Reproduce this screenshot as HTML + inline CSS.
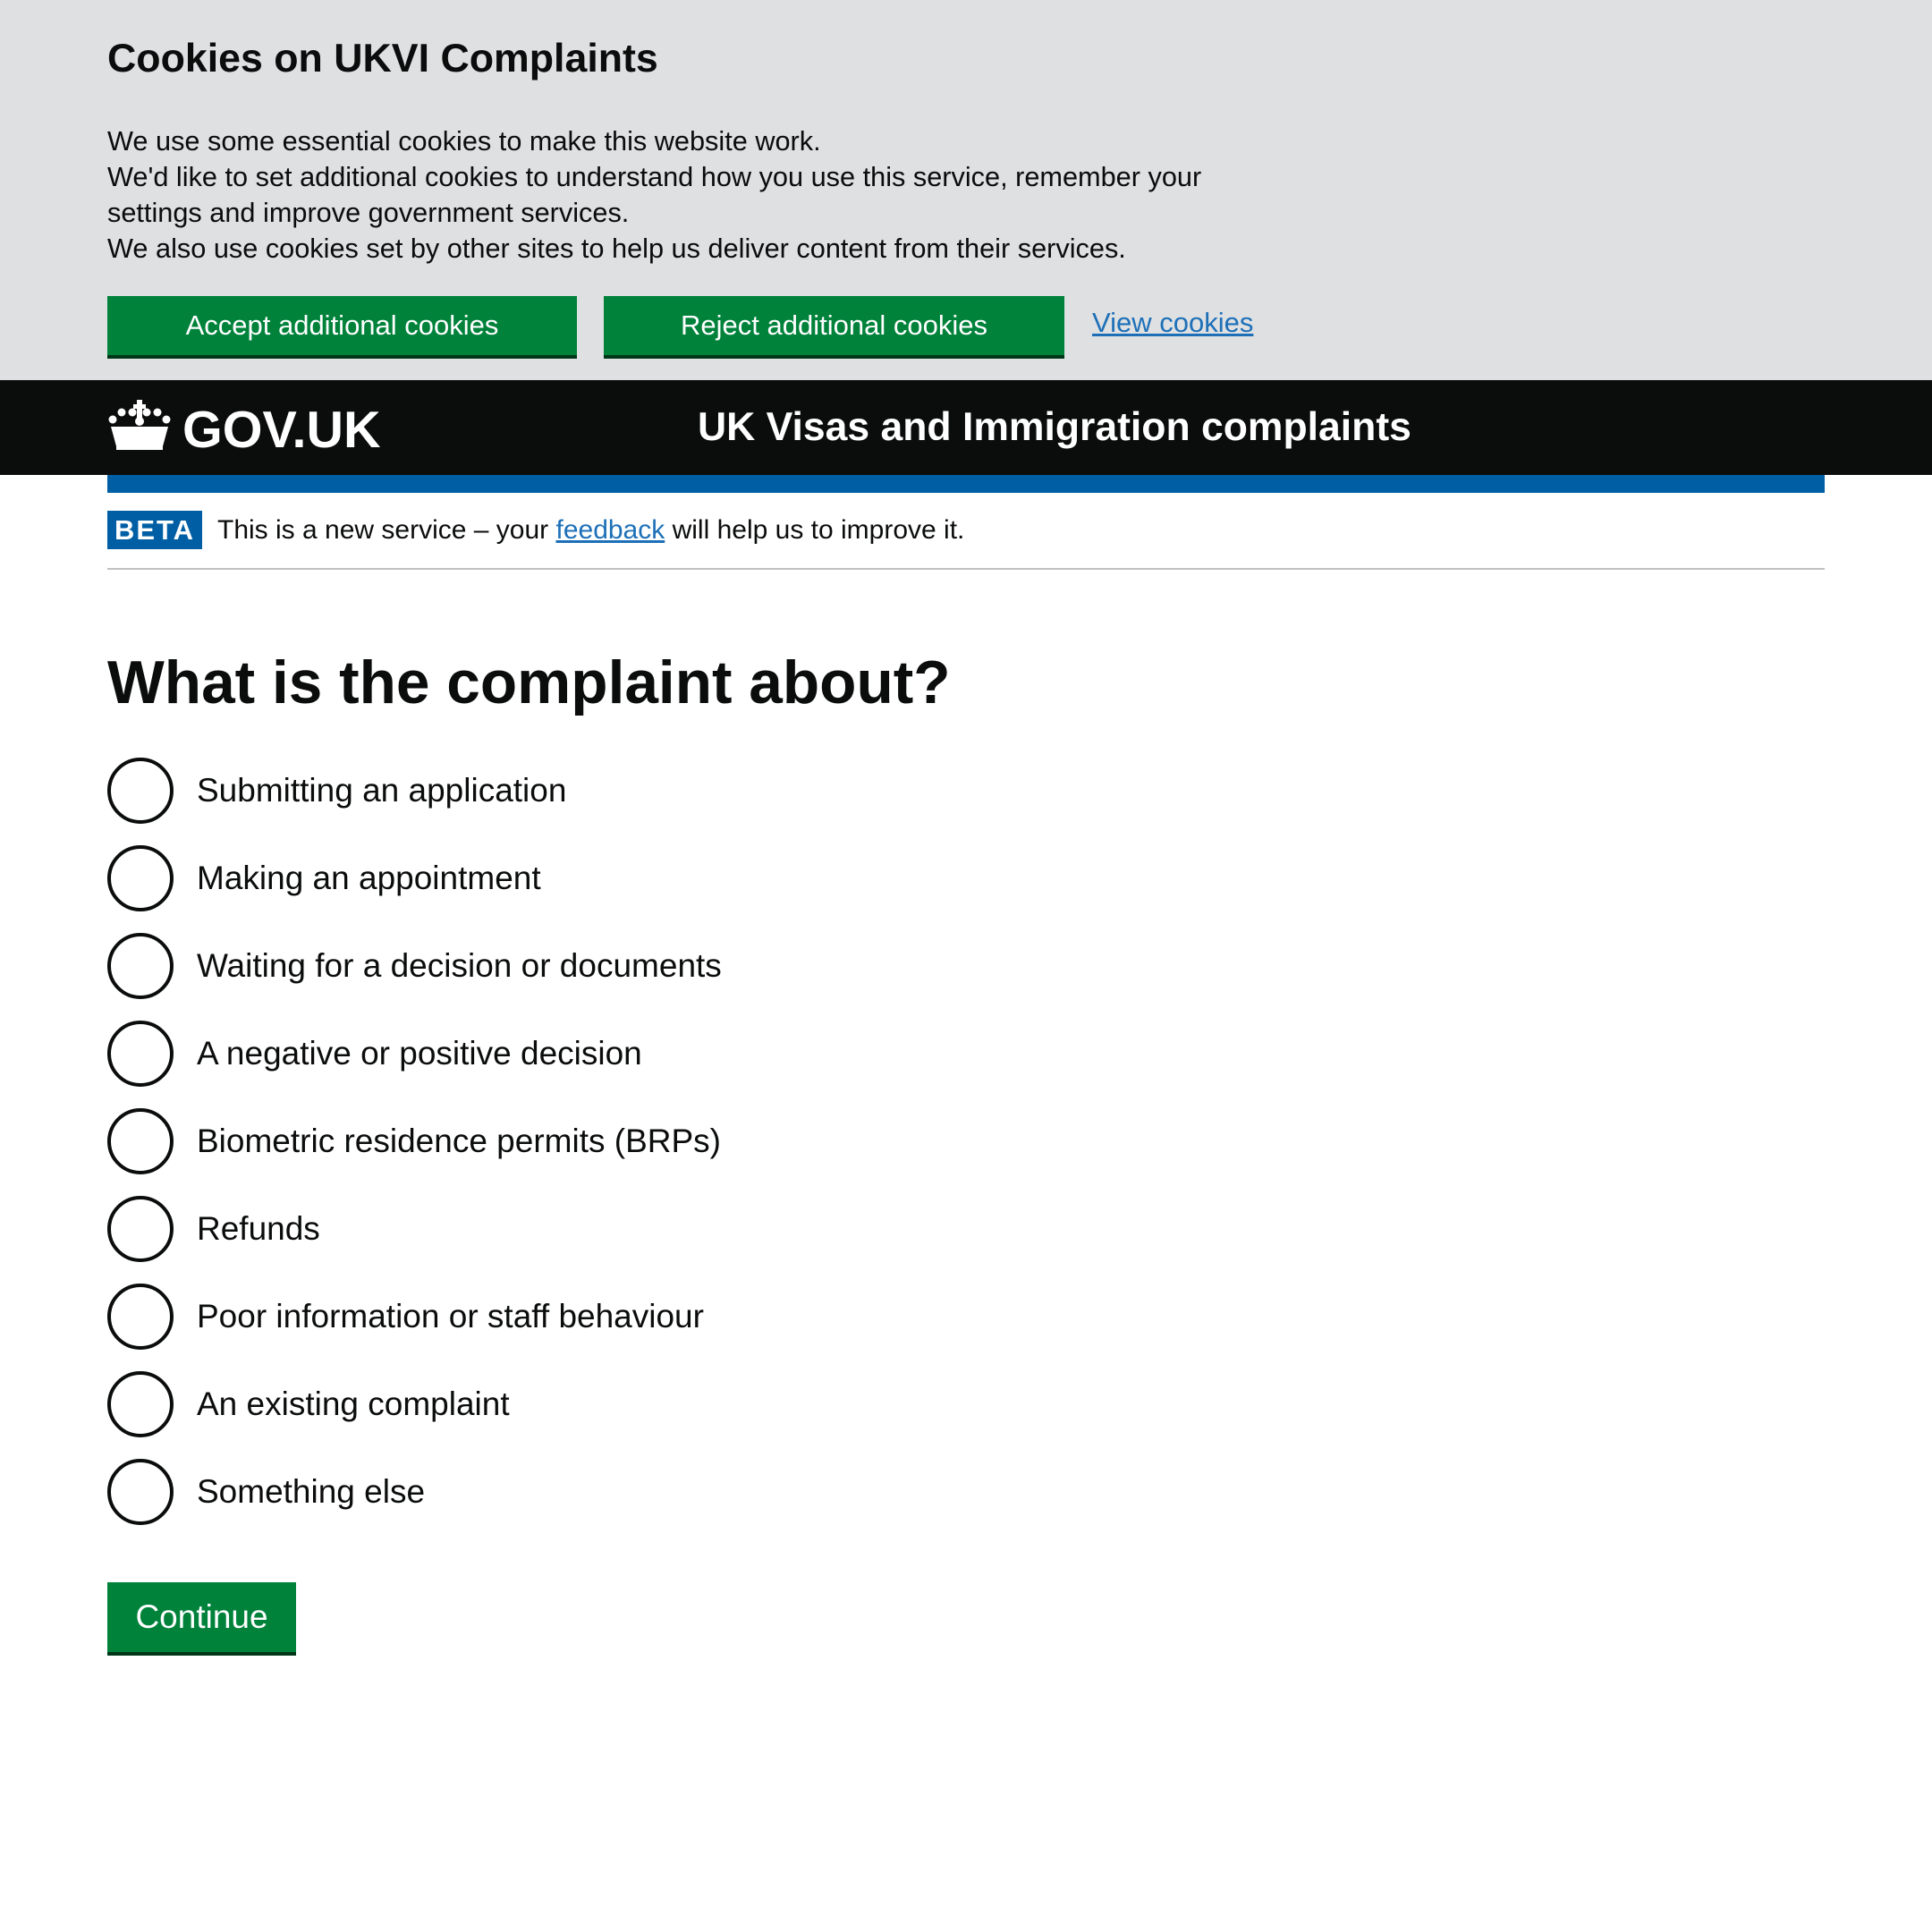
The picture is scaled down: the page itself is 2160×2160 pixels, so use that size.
<!DOCTYPE html>
<html><head><meta charset="utf-8"><style>
*{box-sizing:border-box;margin:0;padding:0}
body{width:2160px;height:2160px;background:#fff;font-family:"Liberation Sans",Arial,sans-serif;color:#0b0c0c;position:relative;overflow:hidden}
.abs{position:absolute;white-space:nowrap}
.cb{position:absolute;left:0;top:0;width:2160px;height:425px;background:#dee0e2}
.btn{position:absolute;background:#00823b;color:#fff;box-shadow:0 4px 0 #003618;display:flex;align-items:center;justify-content:center;font-size:31px}
.radio{position:absolute;left:120px;width:74px;height:74px;border:4px solid #0b0c0c;border-radius:50%}
.lab{position:absolute;left:220px;font-size:37px;line-height:40px}
a{color:#1d70b8;text-decoration:underline}
</style></head><body>
<div class="cb"></div>
<div class="abs" style="left:120px;top:38px;font-size:44.7px;font-weight:bold;line-height:56px">Cookies on UKVI Complaints</div>
<div class="abs" style="left:120px;top:138px;font-size:30.7px;line-height:40px">We use some essential cookies to make this website work.<br>We'd like to set additional cookies to understand how you use this service, remember your<br>settings and improve government services.<br>We also use cookies set by other sites to help us deliver content from their services.</div>
<div class="btn" style="left:120px;top:331px;width:525px;height:66px">Accept additional cookies</div>
<div class="btn" style="left:675px;top:331px;width:515px;height:66px">Reject additional cookies</div>
<div class="abs" style="left:1221px;top:341px;font-size:31px;line-height:40px"><a>View cookies</a></div>
<div style="position:absolute;left:0;top:425px;width:2160px;height:106px;background:#0b0c0c"></div>
<svg class="abs" style="left:120px;top:447px" width="72" height="56" viewBox="0 0 72 56" fill="#fff">
<circle cx="6" cy="22" r="4.5"/><circle cx="16" cy="14" r="4.5"/><circle cx="28" cy="14" r="4.5"/><circle cx="44" cy="14" r="4.5"/><circle cx="56" cy="14" r="4.5"/><circle cx="66" cy="22" r="4.5"/>
<rect x="33" y="0" width="6" height="20"/><rect x="29" y="5" width="14" height="5"/><circle cx="36" cy="24" r="5"/>
<path d="M4 30 L68 30 L62 52 L10 52 Z"/>
<path d="M10 56 L62 56 L62 52 L10 52Z"/>
</svg>
<div class="abs" style="left:204px;top:446px;font-size:57.5px;font-weight:bold;color:#fff;line-height:70px">GOV.UK</div>
<div class="abs" style="left:780px;top:450px;font-size:44.5px;font-weight:bold;color:#fff;line-height:56px">UK Visas and Immigration complaints</div>
<div style="position:absolute;left:120px;top:531px;width:1920px;height:20px;background:#005ea5"></div>
<div class="abs" style="left:120px;top:571px;width:106px;height:43px;background:#005ea5;color:#fff;font-weight:bold;font-size:31px;letter-spacing:2px;display:flex;align-items:center;justify-content:center">BETA</div>
<div class="abs" style="left:243px;top:574px;font-size:30px;line-height:38px">This is a new service – your <a>feedback</a> will help us to improve it.</div>
<div style="position:absolute;left:120px;top:635px;width:1920px;height:2px;background:#bfc1c3"></div>
<div class="abs" style="left:120px;top:720px;font-size:67.6px;font-weight:bold;line-height:88px">What is the complaint about?</div>
<div class="radio" style="top:847px"></div><div class="lab" style="top:864px">Submitting an application</div>
<div class="radio" style="top:945px"></div><div class="lab" style="top:962px">Making an appointment</div>
<div class="radio" style="top:1043px"></div><div class="lab" style="top:1060px">Waiting for a decision or documents</div>
<div class="radio" style="top:1141px"></div><div class="lab" style="top:1158px">A negative or positive decision</div>
<div class="radio" style="top:1239px"></div><div class="lab" style="top:1256px">Biometric residence permits (BRPs)</div>
<div class="radio" style="top:1337px"></div><div class="lab" style="top:1354px">Refunds</div>
<div class="radio" style="top:1435px"></div><div class="lab" style="top:1452px">Poor information or staff behaviour</div>
<div class="radio" style="top:1533px"></div><div class="lab" style="top:1550px">An existing complaint</div>
<div class="radio" style="top:1631px"></div><div class="lab" style="top:1648px">Something else</div>
<div class="btn" style="left:120px;top:1769px;width:211px;height:78px;font-size:37px">Continue</div>
</body></html>
